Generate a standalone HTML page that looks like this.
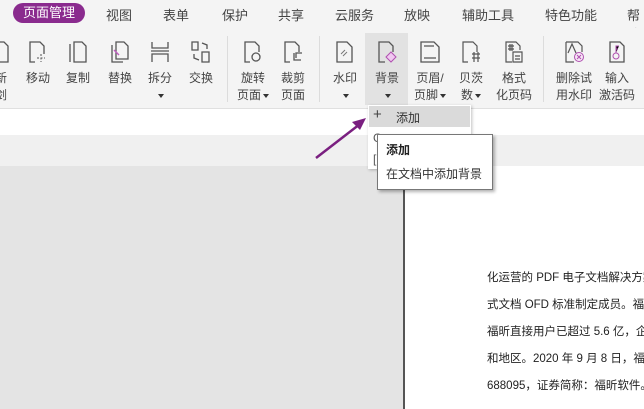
<!DOCTYPE html>
<html><head><meta charset="utf-8"><style>
*{margin:0;padding:0;box-sizing:border-box}
body{width:644px;height:409px;overflow:hidden;position:relative;background:#e4e4e4;font-family:"Liberation Sans","Noto Sans CJK SC",sans-serif;color:#333}
.abs{position:absolute}
.tabbar{left:0;top:0;width:644px;height:28px;background:#f4f4f4}
.tab{position:absolute;top:5px;font-size:13px;color:#444}
.act{left:13px;top:3px;width:72px;height:20px;border-radius:10px;background:#8a2b8e;color:#fff;text-align:center;line-height:20px;font-size:13px}
.tool{left:0;top:28px;width:644px;height:81px;background:#f4f4f4;border-bottom:1px solid #e0e0e0}
.btn{position:absolute;top:0;width:42px;text-align:center;font-size:12px;line-height:17px;color:#444}
.btn svg{display:block;margin:12px auto 0}
.btn .l{margin-top:6px}
.sep{position:absolute;top:8px;width:1px;height:66px;background:#dcdcdc}
.tri{display:inline-block;width:0;height:0;border-left:3px solid transparent;border-right:3px solid transparent;border-top:4px solid #333;vertical-align:middle;margin-left:2px}
</style></head><body>
<div class="abs tabbar">
<div class="abs act">页面管理</div>
<div class="tab" style="left:106px">视图</div>
<div class="tab" style="left:163px">表单</div>
<div class="tab" style="left:222px">保护</div>
<div class="tab" style="left:278px">共享</div>
<div class="tab" style="left:335px">云服务</div>
<div class="tab" style="left:404px">放映</div>
<div class="tab" style="left:462px">辅助工具</div>
<div class="tab" style="left:545px">特色功能</div>
<div class="tab" style="left:627px">帮助</div>
</div>
<div class="abs tool">
<div class="abs" style="left:365px;top:5px;width:43px;height:72px;background:#e2e2e2"></div>
<div class="btn" style="left:-20px"><svg width="22" height="24"><path d="M14 2H4v20h14V6z" fill="none" stroke="#555" stroke-width="1.3"/></svg><div class="l">新<br>剑</div></div>
<div class="btn" style="left:17px"><svg width="22" height="24"><path d="M8 22H3V2h10l4 4v8" fill="none" stroke="#555" stroke-width="1.3"/><path d="M14 14v8M10 18h8" stroke="#555" stroke-dasharray="2 1.5"/></svg><div class="l">移动</div></div>
<div class="btn" style="left:57px"><svg width="22" height="24"><path d="M3 4v18M7 2h8l4 4v16H7z" fill="none" stroke="#555" stroke-width="1.3"/></svg><div class="l">复制</div></div>
<div class="btn" style="left:99px"><svg width="22" height="24"><path d="M3 5v17h11M7 2h8l4 4v13H7z" fill="none" stroke="#555" stroke-width="1.3"/><path d="M5 10l5 5" stroke="#c060c0" stroke-width="1.5"/></svg><div class="l">替换</div></div>
<div class="btn" style="left:139px"><svg width="22" height="24"><path d="M3 2v6h16V2M3 22v-8h16v8M2 11h18" fill="none" stroke="#555" stroke-width="1.3"/></svg><div class="l">拆分<br><span class="tri"></span></div></div>
<div class="btn" style="left:180px"><svg width="22" height="24"><path d="M2 2h6v8H2zM12 12h7v10h-7zM12 3l5 2v4M9 20l-5-2v-4" fill="none" stroke="#555" stroke-width="1.3"/></svg><div class="l">交换</div></div>
<div class="sep" style="left:227px"></div>
<div class="btn" style="left:232px"><svg width="22" height="24"><path d="M8 22H3V2h10l4 4v6" fill="none" stroke="#555" stroke-width="1.3"/><circle cx="14" cy="17" r="4" fill="none" stroke="#555" stroke-width="1.3"/></svg><div class="l">旋转<br>页面<span class="tri"></span></div></div>
<div class="btn" style="left:272px"><svg width="22" height="24"><path d="M8 22H3V2h10l4 4v6" fill="none" stroke="#555" stroke-width="1.3"/><path d="M12 13v7h7M14 18v-5h6" fill="none" stroke="#555" stroke-width="1.3"/></svg><div class="l">裁剪<br>页面</div></div>
<div class="sep" style="left:319px"></div>
<div class="btn" style="left:324px"><svg width="22" height="24"><path d="M3 2h10l5 5v15H3z" fill="none" stroke="#555" stroke-width="1.3"/><path d="M7 14l4-4M9 16l4-4" stroke="#777"/></svg><div class="l">水印<br><span class="tri"></span></div></div>
<div class="btn" style="left:366px"><svg width="22" height="24"><path d="M9 22H3V2h10l4 4v6" fill="none" stroke="#555" stroke-width="1.3"/><path d="M10 17l5-5 5 5-5 5z" fill="#f0c8f0" stroke="#b050b0"/></svg><div class="l">背景<br><span class="tri"></span></div></div>
<div class="btn" style="left:409px"><svg width="22" height="24"><path d="M2 2h13l5 5v15H2zM5 6h10M5 18h12" fill="none" stroke="#555" stroke-width="1.3"/></svg><div class="l">页眉/<br>页脚<span class="tri"></span></div></div>
<div class="btn" style="left:450px"><svg width="22" height="24"><path d="M8 22H3V2h10l4 4v6M12 14h8M12 18h8M14 12v10M18 12v10" fill="none" stroke="#555" stroke-width="1.2"/></svg><div class="l">贝茨<br>数<span class="tri"></span></div></div>
<div class="btn" style="left:493px"><svg width="22" height="24"><path d="M9 22H3V2h10l4 4v4M5 6h6M5 9h6M7 4v7M9 4v7M10 12h9v10h-9zM12 16h5M12 19h5" fill="none" stroke="#555" stroke-width="1.2"/></svg><div class="l">格式<br>化页码</div></div>
<div class="sep" style="left:543px"></div>
<div class="btn" style="left:551px;width:46px"><svg width="22" height="24"><path d="M3 2h12l4 4v6M3 2v20h8M5 13l4-9 4 9" fill="none" stroke="#555" stroke-width="1.2"/><circle cx="16" cy="17" r="4.5" fill="#f6e6f6" stroke="#b050b0"/><path d="M14 15l4 4M18 15l-4 4" stroke="#b050b0"/></svg><div class="l">删除试<br>用水印</div></div>
<div class="btn" style="left:596px"><svg width="22" height="24"><path d="M4 2h10l4 4v16H4z" fill="none" stroke="#555" stroke-width="1.3"/><circle cx="10" cy="16" r="3" fill="none" stroke="#b050b0"/><path d="M10 13V6h3M10 9h2" stroke="#b050b0"/></svg><div class="l">输入<br>激活码</div></div>
</div>
<div class="abs" style="left:0;top:109px;width:644px;height:26px;background:#fff"></div>
<div class="abs" style="left:0;top:135px;width:644px;height:31px;background:#f0f0f0"></div>
<div class="abs" style="left:403px;top:166px;width:241px;height:243px;background:#fff;border-left:2px solid #555"></div>
<div class="abs" style="left:487px;top:265px;font-size:11.5px;line-height:27px;color:#222;white-space:nowrap">化运营的 PDF 电子文档解决方案<br>式文档 OFD 标准制定成员。福昕<br>福昕直接用户已超过 5.6 亿，企业<br>和地区。2020 年 9 月 8 日，福昕<br>688095，证券简称：福昕软件。</div>
<div class="abs" style="left:368px;top:105px;width:103px;height:64px;background:#fff;box-shadow:1px 1px 3px rgba(0,0,0,.25)"></div>
<div class="abs" style="left:369px;top:106px;width:101px;height:21px;background:#dadada"></div>
<div class="abs" style="left:373px;top:106px;font-size:15px;color:#444">+</div>
<div class="abs" style="left:396px;top:109px;font-size:12px;color:#333">添加</div>
<div class="abs" style="left:373px;top:131px;font-size:12px;color:#555">G</div>
<div class="abs" style="left:373px;top:152px;font-size:12px;color:#555">[</div>
<svg class="abs" style="left:310px;top:112px" width="62" height="50"><path d="M6 46L50 12" stroke="#7a1f80" stroke-width="2.5"/><path d="M56 6L42 10l8 8z" fill="#7a1f80"/></svg>
<div class="abs" style="left:377px;top:134px;width:116px;height:56px;background:#fff;border:1px solid #777;box-shadow:2px 2px 3px rgba(0,0,0,.3)"></div>
<div class="abs" style="left:386px;top:141px;font-size:12px;font-weight:bold;color:#222">添加</div>
<div class="abs" style="left:386px;top:165px;font-size:12px;color:#333">在文档中添加背景</div>
</body></html>
